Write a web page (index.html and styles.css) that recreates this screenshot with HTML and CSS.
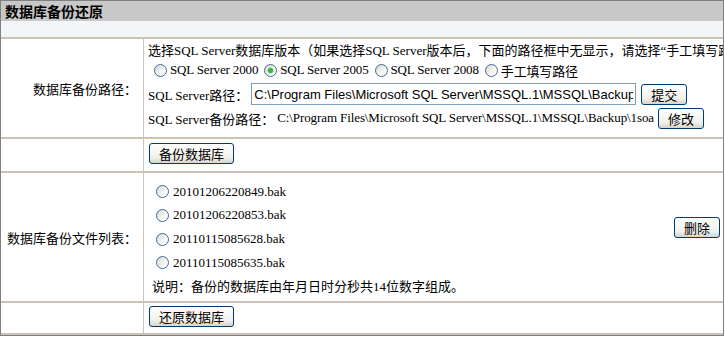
FILE: index.html
```html
<!DOCTYPE html>
<html lang="zh-CN">
<head>
    <meta charset="UTF-8">
    <title>数据库备份还原</title>
    <link rel="stylesheet" href="styles.css">
</head>
<body>
    <div class="panel">
        <div class="panel-title">数据库备份还原</div>
        <div class="panel-sub"></div>

        <div class="form-row row-path">
            <div class="label">数据库备份路径：</div>
            <div class="field">
                <div class="line line-tip">选择SQL Server数据库版本（如果选择SQL Server版本后，下面的路径框中无显示，请选择“手工填写路径”）</div>
                <div class="line">
                    <label class="opt"><input type="radio" name="ver">SQL Server 2000</label>
                    <label class="opt"><input type="radio" name="ver" checked>SQL Server 2005</label>
                    <label class="opt"><input type="radio" name="ver">SQL Server 2008</label>
                    <label class="opt"><input type="radio" name="ver">手工填写路径</label>
                </div>
                <div class="line">
                    <span>SQL Server路径：</span>
                    <input class="path-input" type="text" value="C:\Program Files\Microsoft SQL Server\MSSQL.1\MSSQL\Backup">
                    <button class="btn">提交</button>
                </div>
                <div class="line">
                    <span>SQL Server备份路径：</span>
                    <span class="path-text">C:\Program Files\Microsoft SQL Server\MSSQL.1\MSSQL\Backup\1soa</span>
                    <button class="btn">修改</button>
                </div>
            </div>
        </div>

        <div class="form-row row-action">
            <div class="label"></div>
            <div class="field">
                <button class="btn">备份数据库</button>
            </div>
        </div>

        <div class="form-row row-files">
            <div class="label">数据库备份文件列表：</div>
            <div class="field">
                <div class="file-box">
                    <div class="file-list">
                        <label class="file"><input type="radio" name="bak">20101206220849.bak</label>
                        <label class="file"><input type="radio" name="bak">20101206220853.bak</label>
                        <label class="file"><input type="radio" name="bak">20110115085628.bak</label>
                        <label class="file"><input type="radio" name="bak">20110115085635.bak</label>
                    </div>
                    <button class="btn btn-delete">删除</button>
                </div>
                <div class="note">说明：备份的数据库由年月日时分秒共14位数字组成。</div>
            </div>
        </div>

        <div class="form-row row-restore">
            <div class="label"></div>
            <div class="field">
                <button class="btn">还原数据库</button>
            </div>
        </div>
    </div>
</body>
</html>
```

FILE: styles.css
```css
:root {
    --clr-frame: #808080;
    --clr-title: #c8c8c8;
    --clr-sub: #f4f5f7;
    --clr-line: #c9c5b2;
    --clr-btn-border: #003c74;
    --clr-radio: #3f6a98;
}

body {
    margin: 0;
    font: 13px "Liberation Serif", "Noto Sans CJK SC", serif;
    color: #000;
    background: #fff;
}

.panel {
    width: 724px;
    box-sizing: border-box;
    border: 1px solid var(--clr-frame);
}

.panel-title {
    height: 20px;
    line-height: 20px;
    padding-left: 4px;
    background: var(--clr-title);
    font: bold 14px "Noto Sans CJK SC", sans-serif;
}

.panel-sub {
    height: 16px;
    background: var(--clr-sub);
}

.form-row {
    display: grid;
    grid-template-columns: 143px 1fr;
    border-top: 2px solid var(--clr-line);
}

.form-row:last-child {
    border-bottom: 2px solid var(--clr-line);
}

.label {
    display: flex;
    align-items: center;
    justify-content: flex-end;
    padding-right: 6px;
    border-right: 1px solid var(--clr-line);
    font: 13px "Noto Sans CJK SC", sans-serif;
    white-space: nowrap;
}

.field {
    padding-left: 4px;
    min-width: 0;
}

/* row heights */
.row-path { height: 98px; }
.row-action { height: 32px; }
.row-files { height: 128px; }
.row-restore { height: 30px; }

.row-path .field {
    padding-top: 1px;
}

.line {
    height: 24px;
    display: flex;
    align-items: center;
    white-space: nowrap;
}

.line-tip {
    height: 18px;
    overflow: hidden;
}

.opt {
    display: flex;
    align-items: center;
    margin-left: 6px;
    letter-spacing: -0.15px;
}

input[type="radio"] {
    appearance: none;
    -webkit-appearance: none;
    width: 13px;
    height: 13px;
    margin: 0 3px 0 0;
    border: 1px solid var(--clr-radio);
    border-radius: 50%;
    box-sizing: border-box;
    background: linear-gradient(135deg, #d8d8d2, #fdfdfc 75%);
}

input[type="radio"]:checked {
    background:
        radial-gradient(circle, #3cb43c 0 2px, #7ed27e 2.6px, transparent 3.4px),
        linear-gradient(135deg, #d8d8d2, #fdfdfc 75%);
}

.path-input {
    width: 385px;
    height: 22px;
    box-sizing: border-box;
    margin: 0 5px 0 3px;
    padding: 0 2px;
    border: 1px solid #7f9db9;
    font: 13px "Liberation Sans", sans-serif;
}

.path-text {
    margin: 0 4px 0 3px;
    letter-spacing: -0.1px;
}

.btn {
    height: 21px;
    padding: 0 9px;
    border: 1px solid var(--clr-btn-border);
    border-radius: 3px;
    background: linear-gradient(#ffffff, #f1f0ea 70%, #d9d4c8);
    font: 13px "Noto Sans CJK SC", sans-serif;
    line-height: 19px;
    color: #000;
}

.row-action .field,
.row-restore .field {
    padding-left: 5px;
}

.row-action .field {
    padding-top: 4px;
}

.row-restore .field {
    padding-top: 3px;
}

.row-files .field {
    padding-top: 7px;
}

.file-box {
    display: flex;
    align-items: center;
}

.file-list {
    display: flex;
    flex-direction: column;
}

.file {
    height: 23px;
    display: flex;
    align-items: center;
    padding-left: 8px;
}

.file:nth-child(2),
.file:nth-child(3) {
    height: 24px;
}

.file input[type="radio"] {
    margin-right: 4px;
}

.btn-delete {
    margin-left: auto;
    margin-right: 3px;
}

.note {
    height: 22px;
    display: flex;
    align-items: center;
    padding-left: 4px;
}
```
